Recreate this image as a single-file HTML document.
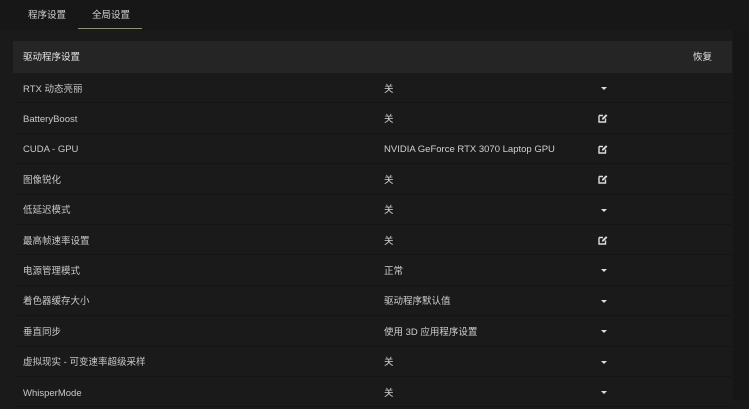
<!DOCTYPE html>
<html><head><meta charset="utf-8"><style>
body{margin:0;width:749px;height:400px;overflow:hidden;background:#1a1a1a;font-family:"Liberation Sans","Noto Sans CJK SC",sans-serif;font-size:9.5px;color:#c9c9c9;position:relative}
.top{position:absolute;left:0;top:0;width:749px;height:30px;background:#171717}
.tab{position:absolute;top:9px;line-height:14px;font-size:9.5px;color:#cfcfcf}
.ul{position:absolute;left:78px;top:28px;width:64px;height:1px;background:#8a9a5a}
.right{position:absolute;left:733px;top:30px;width:16px;height:370px;background:#161616}
.hdr{position:absolute;left:13px;top:41px;width:719px;height:32px;background:#252525}
.hdr span{position:absolute;top:1px;line-height:32px;color:#e6e6e6}
.row{position:absolute;left:13px;width:719px;height:30.4px;border-bottom:1px solid #151515;box-sizing:border-box}
.row .l{position:absolute;left:10px;top:1.5px;line-height:30px}
.row .v{position:absolute;left:371px;top:1.5px;line-height:30px;color:#d0d0d0}
.ar{position:absolute;left:588px;top:14px;width:0;height:0;border-left:3px solid transparent;border-right:3px solid transparent;border-top:3px solid #ddd}
.ed{position:absolute;left:585px;top:10px;width:10px;height:10px}
</style></head><body>
<div class="top"></div>
<div class="tab" style="left:28px">程序设置</div>
<div class="tab" style="left:92px">全局设置</div>
<div class="ul"></div>
<div class="right"></div>
<div class="hdr"><span style="left:10px">驱动程序设置</span><span style="left:680px">恢复</span></div>
<div id="rows"></div>
<script>
var d=[["RTX 动态亮丽","关",0],["BatteryBoost","关",1],["CUDA - GPU","NVIDIA GeForce RTX 3070 Laptop GPU",1],["图像锐化","关",1],["低延迟模式","关",0],["最高帧速率设置","关",1],["电源管理模式","正常",0],["着色器缓存大小","驱动程序默认值",0],["垂直同步","使用 3D 应用程序设置",0],["虚拟现实 - 可变速率超级采样","关",0],["WhisperMode","关",0]];
var h="";
var ed='<svg class="ed" viewBox="0 0 10 10"><path d="M1 2.5h4M1 2.5v6.5h6.5V5.5" fill="none" stroke="#ddd" stroke-width="1.4"/><path d="M3.8 6.8l0.4-1.8L8 1.2l1.4 1.4-3.8 3.8z" fill="#ddd"/></svg>';
d.forEach(function(r,i){h+='<div class="row" style="top:'+(73+i*30.4)+'px"><span class="l">'+r[0]+'</span><span class="v">'+r[1]+'</span>'+(r[2]?ed:'<div class="ar"></div>')+'</div>';});
document.getElementById("rows").innerHTML=h;
</script>
</body></html>
